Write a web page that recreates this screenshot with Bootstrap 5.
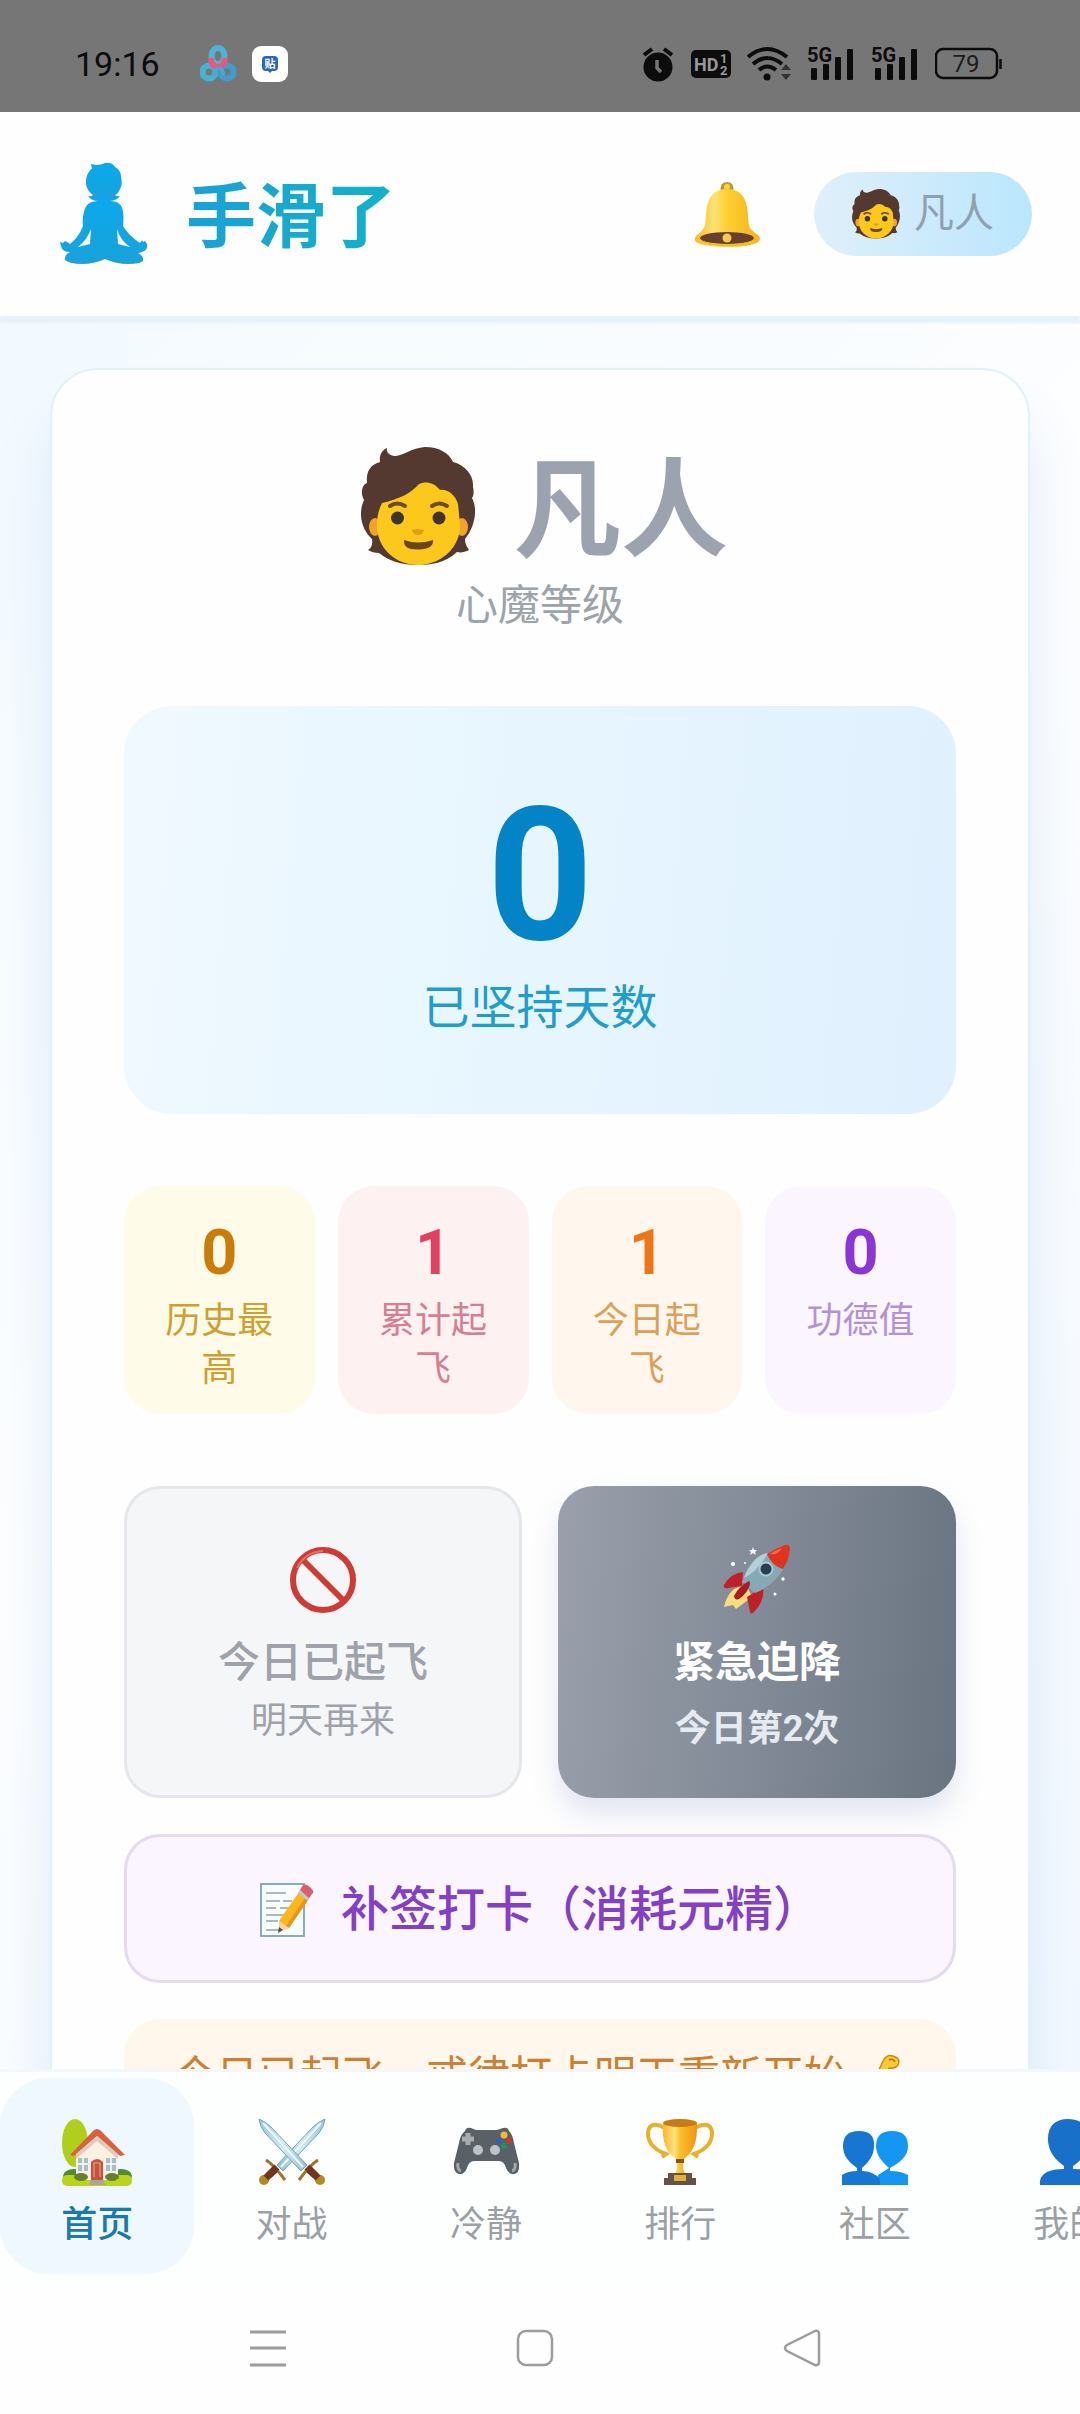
<!DOCTYPE html>
<html lang="zh-CN">
<head>
<meta charset="utf-8">
<meta name="viewport" content="width=device-width, initial-scale=1">
<title>手滑了</title>
<link href="https://cdn.jsdelivr.net/npm/bootstrap@5.3.0/dist/css/bootstrap.min.css" rel="stylesheet">
<style>
  body { font-family: Roboto, "Noto Sans CJK SC", sans-serif; background: linear-gradient(135deg, #f0f9ff 0%, #fdfeff 45%, #f0f7ff 100%); }
  svg { flex-shrink: 0; display: block; }
  a, button { text-decoration: none; }

  .status-bar { height: 112px; padding: 0 78px 0 75px; background: #767676; color: #0c0c0c; }
  .status-bar .clock { font-size: 34px; line-height: 48px; margin-top: 16px; }
  .status-icons { gap: 16px; margin-top: 16px; }
  .app-icons { margin-left: 40px; }

  .app-header { padding: 44px 48px; min-height: 204px; background: #fefefe; box-shadow: 0 7px 2px #e7f2f8; z-index: 1; }
  .app-name { font-size: 70px; line-height: 96px; font-weight: 700; margin-left: 26px; padding-top: 8px; background: linear-gradient(90deg, #1ba1d3, #12b2c8); -webkit-background-clip: text; background-clip: text; color: transparent; }
  .bell-btn { margin-right: 51px; }
  .level-pill { height: 84px; padding: 0 38px; gap: 14px; font-size: 40px; color: #8fa0b0; background: linear-gradient(90deg, #e0effa, #bae6fd); }

  .app-main { flex: 1 1 0; min-height: 0; }
  .panel { margin: 52px 50px 0; padding: 72px; border: 2px solid #e0f2f5; border-radius: 48px; background: #fefefe; box-shadow: 0 48px 56px rgba(70, 130, 200, .15); }
  .hero-name { gap: 30px; font-size: 107px; line-height: 120px; font-weight: 700; color: #9ca3af; }
  .hero-name span { padding-top: 10px; }
  .hero-sub { font-size: 42px; line-height: 68px; color: #9ca3a9; margin-bottom: 66px; }
  .streak { padding: 74px 72px 70px; border-radius: 48px; background: linear-gradient(95deg, #f0f9ff, #e7f6fe 45%, #e0f0fe); }
  .streak-num { font-size: 185px; line-height: 192px; font-weight: 700; color: #0284c7; }
  .streak-txt { font-size: 47px; line-height: 72px; color: #1f9dcb; }
  .stats { gap: 23px; margin: 72px 0; }
  .stat { flex: 1 1 0; padding: 29px 36px 21px; border-radius: 36px; }
  .stat-num { font-size: 63px; line-height: 76px; font-weight: 700; margin-bottom: 6px; }
  .stat-txt { font-size: 36px; line-height: 48px; }
  .s-gold { background: #fefce8; color: #ca7c08; } .s-gold .stat-txt { color: #cfa02f; }
  .s-rose { background: #fef1f1; color: #e0425f; } .s-rose .stat-txt { color: #d47f92; }
  .s-orange { background: #fff7ed; color: #f07514; } .s-orange .stat-txt { color: #dba058; }
  .s-purple { background: #faf5ff; color: #8b35d6; } .s-purple .stat-txt { color: #b391d6; }

  .actions { gap: 36px; margin-bottom: 36px; }
  .action { flex: 1 1 0; padding: 54px 20px 45px; border: 0; border-radius: 36px; }
  .action-title { font-size: 42px; line-height: 60px; margin-top: 13px; }
  .action-sub { font-size: 36px; line-height: 48px; }
  .rest { background: #f4f6f8; box-shadow: inset 0 0 0 3px #e5e7eb; color: #9fa2aa; }
  .rest .action-title { font-weight: 500; margin-bottom: 4px; }
  .landing { background: linear-gradient(95deg, #9a9fab, #848d99 45%, #6a7380); box-shadow: 0 16px 28px rgba(110, 130, 190, .2); color: #fff; font-weight: 700; }
  .landing .action-title { margin-bottom: 12px; }
  .landing .action-sub { color: #e6eaf1; }
  .makeup { padding: 39px 20px 37px; gap: 26px; border: 0; border-radius: 36px; background: #faf5ff; box-shadow: inset 0 0 0 3px #e4daf2; color: #8340c4; font-size: 48px; line-height: 73px; font-weight: 500; margin-bottom: 36px; }
  .notice { padding: 28px 24px 24px; gap: 16px; border-radius: 36px; background: #fff7eb; color: #cc8034; font-size: 42px; line-height: 60px; }

  .tab-bar { padding: 6px 0 8px; border-top: 3px solid #f1f7fa; background: #fdfefe; z-index: 1; }
  .tab { flex: 0 0 18%; gap: 10px; padding: 38px 0 22px; border-radius: 48px; color: #9c9fa4; font-size: 36px; line-height: 54px; }
  .tab.active { background: #f0f8ff; color: #1b7ba6; font-weight: 500; }
  .sys-bar { height: 132px; padding: 0 144px 0 134px; background: #fefefe; }
  .sys-bar button { flex: 1 1 0; }
</style>
</head>
<body class="d-flex flex-column vh-100 overflow-hidden">

<svg width="0" height="0" class="position-absolute" aria-hidden="true">
  <defs>
    <linearGradient id="gold" x1="0" x2="1"><stop offset="0" stop-color="#f9b72b"/><stop offset=".35" stop-color="#fde27c"/><stop offset=".5" stop-color="#fbc02d"/><stop offset="1" stop-color="#f0940f"/></linearGradient>
    <linearGradient id="bellfill" x1="0" x2="1"><stop offset="0" stop-color="#f9b91f"/><stop offset=".3" stop-color="#fde374"/><stop offset=".5" stop-color="#fdcf31"/><stop offset="1" stop-color="#f5b41d"/></linearGradient>
    <linearGradient id="blade" x1="0" x2="1"><stop offset="0" stop-color="#8fc0d0"/><stop offset=".5" stop-color="#d5eaf2"/><stop offset="1" stop-color="#9ccbdc"/></linearGradient>
    <linearGradient id="zen" x1="0" y1="0" x2="0" y2="1"><stop offset="0" stop-color="#09a9ec"/><stop offset="1" stop-color="#1aa2da"/></linearGradient>
    <symbol id="person" viewBox="0 0 114 119">
      <path fill="#543930" d="M19 15C18 8 21 3 26 1c-1 5 3 8 9 8C44 8 50 1 64 0c14 0 24 6 28 15 12 3 21 13 20 25 1 4 1 8-1 11 6 11 3 29-7 41 0 5 2 8 4 11-4 2-8 3-12 2-12 11-26 13-39 13-17 0-29-4-39-12-4 0-8-1-11-3 3-2 5-5 4-11C0 82-3 66 3 53-1 46 1 38 6 36 5 26 8 18 19 15Z"/>
      <ellipse cx="14" cy="80" rx="6" ry="9" fill="#f0a32a"/><ellipse cx="101" cy="80" rx="6" ry="9" fill="#f0a32a"/>
      <path fill="#fdc81c" d="M21 56c18-4 29-10 37-19 6-3 15-2 21 6 7-1 15 4 18 14l2 20c1 23-19 41-42 41S15 100 16 77c0-8 2-15 5-21Z"/>
      <path d="M29 59q7-5 15 0M71 59q7-5 15 0" stroke="#6d4c1f" stroke-width="4" fill="none" stroke-linecap="round"/>
      <circle cx="36.500" cy="71" r="6.500" fill="#403428"/><circle cx="78" cy="71" r="6.500" fill="#403428"/>
      <path d="M51 83q6-2 12 0-1 5-6 5t-6-5Z" fill="#e39d12"/>
      <path d="M43 93q14 5 29 0 1 9-14.500 9.500T43 93Z" fill="#6a4518"/>
    </symbol>
    <symbol id="fiveg" viewBox="0 0 48 36">
      <text x="0" y="16" font-family="Roboto, sans-serif" font-size="20" font-weight="700">5G</text>
      <rect x="4" y="22" width="6" height="12" rx="1"/><rect x="16" y="18" width="6" height="16" rx="1"/><rect x="28" y="11" width="6" height="23" rx="1"/><rect x="40" y="3" width="6" height="31" rx="1"/>
    </symbol>
  </defs>
</svg>

<div class="status-bar d-flex align-items-center flex-shrink-0">
  <span class="clock">19:16</span>
  <div class="status-icons app-icons d-flex align-items-center">
    <svg width="36" height="38" viewBox="0 0 36 38"><g fill="none" stroke-width="6"><ellipse cx="18" cy="11" rx="6.500" ry="8" stroke="#4db4d6"/><circle cx="9" cy="27" r="6.500" stroke="#45b2d8"/><circle cx="27" cy="27" r="6.500" stroke="#3f9ccb"/><path d="M11 13c0 12 14 12 14 0" stroke="#e9567f"/><path d="M18 22l-5 8M20 22l4 8" stroke="#4aa8cf" stroke-width="4"/></g></svg>
    <svg width="36" height="36" viewBox="0 0 36 36"><rect width="36" height="36" rx="9" fill="#fff"/><path d="M14 10h8q4 0 4 4v7q0 4-4 4h-2l-2 2-2-2h-2q-4 0-4-4v-7q0-4 4-4Z" fill="#2a66bb"/><text x="18" y="22" text-anchor="middle" font-family="Noto Sans CJK SC, sans-serif" font-size="11" font-weight="700" fill="#fff">贴</text></svg>
  </div>
  <div class="status-icons d-flex align-items-center ms-auto">
    <svg width="34" height="36" viewBox="0 0 34 36"><circle cx="17" cy="21" r="14.500" fill="#0c0c0c"/><path d="M3 9l8-6M31 9l-8-6" stroke="#0c0c0c" stroke-width="4"/><path d="M16 14v8l4 4" stroke="#767676" stroke-width="3.500" fill="none"/></svg>
    <svg width="40" height="36" viewBox="0 0 40 36"><rect y="4" width="40" height="28" rx="5" fill="#0c0c0c"/><g fill="#999" font-family="Roboto, sans-serif" font-weight="700"><text x="3" y="25" font-size="18">HD</text><text x="29" y="17" font-size="13">1</text><text x="29" y="29" font-size="13">2</text></g></svg>
    <svg width="44" height="36" viewBox="0 0 44 36"><g fill="none" stroke="#0c0c0c" stroke-width="4"><path d="M1 11Q20-5 40 11"/><path d="M6 18q14-12 29 0"/><path d="M12 24q8-7 17 0"/></g><circle cx="20" cy="31" r="3.500" fill="#0c0c0c"/><path d="M34 24l5-6 5 6zM34 28h10l-5 6z" fill="#333"/></svg>
    <svg width="48" height="36" fill="#0c0c0c"><use href="#fiveg"/></svg>
    <svg width="48" height="36" fill="#0c0c0c"><use href="#fiveg"/></svg>
    <svg width="67" height="36" viewBox="0 0 67 36"><rect x="1" y="3" width="61" height="29" rx="7" fill="none" stroke="#0c0c0c" stroke-width="2.500"/><path d="M65.500 13v10" stroke="#0c0c0c" stroke-width="2.500"/><text x="31" y="26" text-anchor="middle" font-family="Roboto, sans-serif" font-size="24" fill="#1c1c1c">79</text></svg>
  </div>
</div>

<header class="app-header position-relative d-flex align-items-center flex-shrink-0">
  <svg width="112" height="108" viewBox="-12 -3 112 108" role="img" aria-label="打坐">
    <g fill="url(#zen)">
      <path d="M32 6l-1-5 5 1q5 0 9-2 7-1 10 4 6 3 6 10 2 7-1 12-2 5-5 6 3 2 5 1-3 5-12 5-3 2-4 2t-5-2q-8 0-11-5 3 1 5-1-6-4-7-11-1-8 5-15Z"/>
      <path d="M38 34h12v4q12 0 13 11 1 6 0 14 5 9 17 17l2-3 1 2 2-1 2 3q1 6-5 8-2 1-4 1 6 3 5 8-3 3-15 3-12 0-23-5-11 5-23 5-12 0-17-4-1-5 5-8Q2 89 1 83L0 79l3 1 2-2 2 1 3 2q9-7 13-18-1-8 1-14 2-11 14-11Z"/>
    </g>
    <path d="M31 66l-1 15-12 3q9-7 13-18ZM57 66l1 15 12 3Q60 77 57 66Z" fill="#fff"/>
  </svg>
  <span class="app-name">手滑了</span>
  <button type="button" class="bell-btn btn p-0 border-0 ms-auto" aria-label="通知">
    <svg width="72" height="72" viewBox="0 0 72 72"><path d="M30 14q-2-10 6-10t6 10" fill="#b79b2b"/><circle cx="36" cy="9" r="3" fill="#f9d34c"/><path d="M14 47c2-9-2-36 22-36s20 27 22 36q1 5 9 10 4 4 0 7-8 5-31 5T5 64q-3-3 1-7 7-5 8-10Z" fill="url(#bellfill)"/><ellipse cx="36" cy="60" rx="27" ry="6" fill="#69402c"/><circle cx="36" cy="60" r="4.500" fill="#f6c94f"/><path d="M9 61q4 5 27 5t27-5q0 7-27 7T9 61Z" fill="#f4bb22"/></svg>
  </button>
  <button type="button" class="level-pill btn rounded-pill border-0 d-flex align-items-center">
    <svg width="48" height="50"><use href="#person"/></svg><span>凡人</span>
  </button>
</header>

<main class="app-main overflow-hidden">
  <section class="panel text-center">
    <h1 class="hero-name d-flex justify-content-center align-items-center m-0">
      <svg width="132" height="120" viewBox="-9 0 132 120"><use href="#person" width="114" height="119"/></svg><span>凡人</span>
    </h1>
    <div class="hero-sub">心魔等级</div>

    <div class="streak">
      <div class="streak-num">0</div>
      <div class="streak-txt">已坚持天数</div>
    </div>

    <div class="stats d-flex">
      <div class="stat s-gold"><div class="stat-num">0</div><div class="stat-txt">历史最高</div></div>
      <div class="stat s-rose"><div class="stat-num">1</div><div class="stat-txt">累计起飞</div></div>
      <div class="stat s-orange"><div class="stat-num">1</div><div class="stat-txt">今日起飞</div></div>
      <div class="stat s-purple"><div class="stat-num">0</div><div class="stat-txt">功德值</div></div>
    </div>

    <div class="actions d-flex">
      <button type="button" class="action rest d-flex flex-column align-items-center">
        <svg width="80" height="80" viewBox="0 0 80 80"><circle cx="40" cy="40" r="30" fill="none" stroke="#cf3a35" stroke-width="6"/><path d="M19 19l42 42" stroke="#cf3a35" stroke-width="6"/><path d="M14 28Q22 12 40 11" fill="none" stroke="#e87068" stroke-width="2"/></svg>
        <span class="action-title">今日已起飞</span>
        <span class="action-sub">明天再来</span>
      </button>
      <button type="button" class="action landing d-flex flex-column align-items-center">
        <svg width="80" height="80" viewBox="0 0 80 80">
          <g transform="translate(0 -1)">
          <path d="M17 50q-8 7-10 18l9-2 3 4 8-6 8-6-6-13Z" fill="#f8dc80"/>
          <path d="M26 33q-12 1-19 13-1 4 4 3l14-2ZM46 48l-16 10 3 15q1 3 4 0 11-11 9-25Z" fill="#bf2029"/>
          <path d="M51 14q8-5 17-8 5-1 5 4-3 19-15 31-9 9-20 13L25 43q6-18 14-24 5-4 12-5Z" fill="#86a9b5"/>
          <path d="M51 14q-7 1-12 6-8 8-12 19 14-7 24-25Z" fill="#b4d0d8"/>
          <path d="M50 15q9-6 18-9 5-1 5 4-1 11-7 20-11-3-16-15Z" fill="#de331f"/><path d="M53 15q6-4 12-6-5 8-12 6Z" fill="#f36a50"/>
          <circle cx="49" cy="30" r="7.500" fill="#a9c9d2"/><circle cx="49" cy="30" r="5.500" fill="#27404f"/>
          <path d="M32 42q-10 5-15 15 1 5 5 3 9-6 11-15 0-3-1-3Z" fill="#a91c24"/>
          <g fill="#fff"><path d="M36 8l1 3h3l-2 2 1 3-3-2-3 2 1-3-2-2h3z"/><circle cx="16" cy="25" r="2"/><circle cx="66" cy="40" r="1.700"/><circle cx="58" cy="55" r="1.500"/><circle cx="28" cy="24" r="1"/></g>
          </g>
        </svg>
        <span class="action-title">紧急迫降</span>
        <span class="action-sub">今日第2次</span>
      </button>
    </div>

    <button type="button" class="makeup w-100 d-flex justify-content-center align-items-center">
      <svg width="56" height="56" viewBox="0 0 56 56"><rect x="2" y="2" width="43" height="52" fill="#f7fcfe" stroke="#83adbd" stroke-width="2"/><path d="M7 11h20M7 19h14m3 0h9M7 26h10m4 0h10M7 33h19M7 39h12M7 48h14" stroke="#93a3aa" stroke-width="1.500"/><path d="M20 39L40 10l9 8-19 28-9 3Z" fill="#fbb81e"/><path d="M27 44L46 16l3 2-19 28Z" fill="#e99413"/><path d="M20 39l10 7-10 4Z" fill="#f5d6a0"/><path d="M20 45l4 3-5 3Z" fill="#454"/><path d="M39 11l2-3 10 7-2 4Z" fill="#bcc7cf"/><path d="M41 8l3-5q3-2 8 3 4 4 1 6l-3 4Z" fill="#df5c6b"/></svg>
      <span>补签打卡（消耗元精）</span>
    </button>

    <div class="notice d-flex justify-content-center align-items-center">
      <span>今日已起飞，戒律打卡明天重新开始</span>
      <svg width="44" height="48" viewBox="0 0 44 48"><path d="M2 44C9 31 15 22 21 8q4-7 10-5 8 2 5 9-3 4-9 3l-3 12q12-5 17 5 5 14-16 16Q10 49 2 44Z" fill="#fdc92e" stroke="#c48b1c" stroke-width="1.500"/><path d="M27 7q4-2 6 2" fill="none" stroke="#a87511" stroke-width="1.500"/></svg>
    </div>
  </section>
</main>

<nav class="tab-bar position-relative d-flex overflow-hidden flex-shrink-0" aria-label="主导航">
  <a class="tab active d-flex flex-column align-items-center" href="#" aria-current="page">
    <svg width="72" height="72" viewBox="0 0 72 72"><ellipse cx="14" cy="27" rx="13" ry="24" fill="#b0cf1d"/><ellipse cx="13" cy="60" rx="11" ry="7" fill="#548b2f"/><ellipse cx="60" cy="60" rx="11" ry="7" fill="#548b2f"/><rect x="1" y="59" width="70" height="11" rx="5" fill="#b7d41f"/><path d="M15 38l21-22 21 22v26H15Z" fill="#faf1e4"/><path d="M36 13l-3 1L9 39l4 1 23-20 23 20 5-1L39 14Z" fill="#d9623d"/><path d="M36 20L15 38v5l21-18 21 18v-5Z" fill="#e0cbbb"/><path d="M30 64V46q6-6 12 0v18Z" fill="#c4553c"/><path d="M33 61V47h6v14" fill="none" stroke="#e68a6e" stroke-width="1.500"/><g fill="#a4bfc5"><path d="M17 42h10v13H17ZM45 42h10v13H45Z"/></g><path d="M22 42v13m-5-7h10M50 42v13m-5-7h10" stroke="#fff" stroke-width="1.500"/><path d="M28 69l2-5h12l3 5Z" fill="#a8a4a0"/><g fill="#687e30"><ellipse cx="20" cy="61" rx="7" ry="4"/><ellipse cx="51" cy="61" rx="7" ry="4"/></g></svg>
    <span>首页</span>
  </a>
  <a class="tab d-flex flex-column align-items-center" href="#">
    <svg width="72" height="72" viewBox="0 0 72 72"><g id="sword"><path d="M69 3q-1 8-6 14L27 55l-6-6L57 11q5-5 12-8Z" fill="url(#blade)" stroke="#6ba5b8"/><path d="M65 7L25 51" stroke="#edf7fb" stroke-width="2"/><path d="M10 57l5 5 7-6-5-5Z" fill="#713d25"/><path d="M10 44q8 5 19 20" stroke="#a07527" stroke-width="3" fill="none"/><circle cx="8" cy="64" r="5" fill="#b18a22"/><path d="M21 51L10 62" stroke="#74351d" stroke-width="7"/></g><use href="#sword" transform="matrix(-1 0 0 1 72 0)"/></svg>
    <span>对战</span>
  </a>
  <a class="tab d-flex flex-column align-items-center" href="#">
    <svg width="72" height="72" viewBox="0 0 72 72"><path d="M15 15q1-4 6-3l5 2h21l6-2q5-1 6 3 4 4 5 12l5 20q1 10-5 11-5 1-8-6-2-7-7-7H24q-5 0-7 7-3 7-8 6-6-2-5-11l5-20q1-8 6-12Z" fill="#596066"/><path d="M18 17v12m-6-6h12" stroke="#a6adb1" stroke-width="5"/><circle cx="28" cy="34" r="5" fill="#bcc4cb"/><circle cx="45" cy="34" r="5" fill="#bcc4cb"/><circle cx="54" cy="19" r="3.500" fill="#f3bb29"/><circle cx="49" cy="25" r="3" fill="#315dc5"/><circle cx="59" cy="25" r="3" fill="#c7392d"/><circle cx="54" cy="30" r="3" fill="#26915a"/><path d="M8 47q-1 7 3 8M65 47q1 7-3 8" stroke="#a4a8ab" stroke-width="3" fill="none"/></svg>
    <span>冷静</span>
  </a>
  <a class="tab d-flex flex-column align-items-center" href="#">
    <svg width="72" height="72" viewBox="0 0 72 72"><path d="M21 12Q6 4 4 16q-1 15 18 22l-4 3M51 12q15-8 17 4 1 15-18 22l4 3" fill="none" stroke="#e9b02b" stroke-width="4"/><path d="M19 7q17-7 34 0 1 26-12 35l-2 4q-1 7 3 13H30q4-6 3-13l-2-4Q17 33 19 7Z" fill="url(#gold)"/><ellipse cx="36" cy="7" rx="17" ry="4" fill="#c77b16"/><path d="M32 43h8v4h-8Z" fill="#8d5514"/><path d="M24 57h24v7H24ZM20 62h32v7H20Z" fill="#665047"/><path d="M30 59h12v6H30Z" fill="#e2af40"/></svg>
    <span>排行</span>
  </a>
  <a class="tab d-flex flex-column align-items-center" href="#">
    <svg width="72" height="72" viewBox="0 0 72 72"><path d="M69 69V59q-7-4-18-4v-3c9-5 18-11 18-22q0-15-16-15T37 30c0 8 5 15 13 22l-11 7v10Z" fill="#1497f2"/><path d="M3 69V59q6-4 15-4v-3C8 45 4 38 4 30q0-15 16-15t15 15c0 8-4 15-12 22v3q11 0 18 8v6Z" fill="#1876d3"/></svg>
    <span>社区</span>
  </a>
  <a class="tab d-flex flex-column align-items-center" href="#">
    <svg width="72" height="72" viewBox="0 0 72 72"><path d="M7 69q-1-9 7-13 6-3 17-3v-3C18 41 15 31 15 23 15 9 23 3 35 3s21 6 21 20c0 9-4 19-16 27v3q12 0 18 3 8 4 7 13Z" fill="#1970c8"/></svg>
    <span>我的</span>
  </a>
</nav>

<div class="sys-bar d-flex align-items-center flex-shrink-0">
  <button type="button" class="btn p-0 border-0 d-flex justify-content-center" aria-label="最近任务"><svg width="36" height="38" viewBox="0 0 36 38" stroke="#9c9c9c" stroke-width="3"><path d="M0 3h36M0 19h36M0 36h36"/></svg></button>
  <button type="button" class="btn p-0 border-0 d-flex justify-content-center" aria-label="主屏幕"><svg width="38" height="38" viewBox="0 0 38 38"><rect x="2" y="2" width="34" height="34" rx="8" fill="none" stroke="#9c9c9c" stroke-width="2.500"/></svg></button>
  <button type="button" class="btn p-0 border-0 d-flex justify-content-center" aria-label="返回"><svg width="38" height="38" viewBox="0 0 38 38"><path d="M32 2L4 16q-4 3 0 6l28 14q3 1 4-2V4q-1-3-4-2Z" fill="none" stroke="#9c9c9c" stroke-width="2.500"/></svg></button>
</div>

<script src="https://cdn.jsdelivr.net/npm/bootstrap@5.3.0/dist/js/bootstrap.bundle.min.js"></script>
</body>
</html>
